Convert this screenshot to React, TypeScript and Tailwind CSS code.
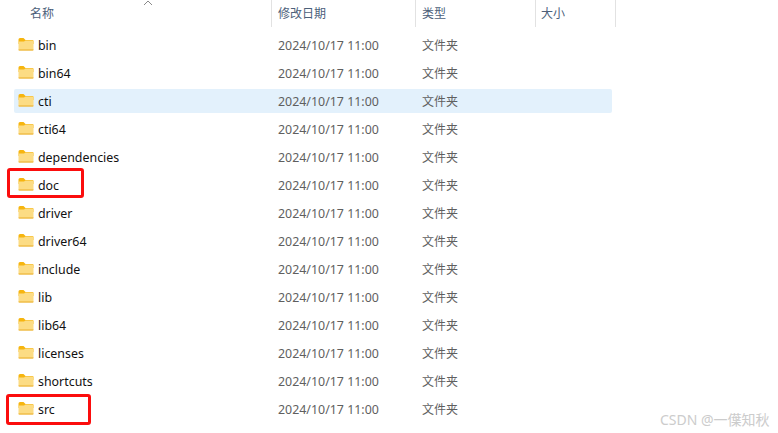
const rows = ["bin","bin64","cti","cti64","dependencies","doc","driver","driver64","include","lib","lib64","licenses","shortcuts","src"];
const font = { fontFamily: '"Noto Sans", "Noto Sans CJK SC", sans-serif' };

function Folder() {
  return (
    <svg width="16" height="13" viewBox="0 0 16 13" className="shrink-0 -translate-y-[1px]">
      <path d="M0.5 1.5 A1.5 1.5 0 0 1 2 0 H5.5 L7.5 2 H14.5 A1 1 0 0 1 15.5 3 V6 H0.5 Z" fill="#f6b50f" />
      <path d="M0.5 3.5 H6 L7.5 2.5 H14.5 A1 1 0 0 1 15.5 3.5 V11.5 A1 1 0 0 1 14.5 12.5 H1.5 A1 1 0 0 1 0.5 11.5 Z" fill="#fcdc84" />
      <path d="M0.5 11.6 H15.5 V11.7 A1 1 0 0 1 14.5 12.6 H1.5 A1 1 0 0 1 0.5 11.7 Z" fill="#e9ad2b" />
    </svg>
  );
}

export default function App() {
  return (
    <div className="relative w-[778px] h-[433px] overflow-hidden bg-white text-[12px]" style={font}>
      <div className="relative flex h-[27px] w-[616px] text-[#4c607a]">
        <div className="w-[272px] pl-[30px] pt-[5px] border-r border-[#e2e2e2]">名称</div>
        <div className="w-[144px] pl-[6px] pt-[5px] border-r border-[#e2e2e2]">修改日期</div>
        <div className="w-[120px] pl-[6px] pt-[5px] border-r border-[#e2e2e2]">类型</div>
        <div className="w-[80px] pl-[5px] pt-[5px] border-r border-[#e2e2e2]">大小</div>
        <svg width="10" height="6" viewBox="0 0 10 6" className="absolute left-[143px] top-0">
          <path d="M1 5 L5 1 L9 5" fill="none" stroke="#8a8a8a" strokeWidth="1" />
        </svg>
      </div>
      <div className="mt-[6px] ml-[14px] w-[598px] flex flex-col gap-[4px]">
        {rows.map((name) => (
          <div key={name} className={`flex h-[24px] items-center pt-[2px] rounded-[2px] ${name === "cti" ? "bg-[#e3f1fc]" : ""}`}>
            <div className="flex w-[257px] items-center gap-[4px] pl-[4px] text-[#111111] text-[12.4px]">
              <Folder />
              <span>{name}</span>
            </div>
            <div className="w-[144px] pl-[7px] text-[#5f5f5f] text-[12.4px]">2024/10/17 11:00</div>
            <div className="pl-[7px] text-[#5f5f5f]">文件夹</div>
          </div>
        ))}
      </div>
      <div className="absolute left-[7px] top-[168px] w-[77px] h-[30px] rounded-[3px] border-[3px] border-[#fb0d0d]" />
      <div className="absolute left-[6px] top-[394px] w-[85px] h-[31px] rounded-[3px] border-[3px] border-[#fb0d0d]" />
      <div className="absolute left-[660px] top-[410px] text-[#cccccc] text-[14px] leading-[19px]">CSDN @一僷知秋</div>
    </div>
  );
}
